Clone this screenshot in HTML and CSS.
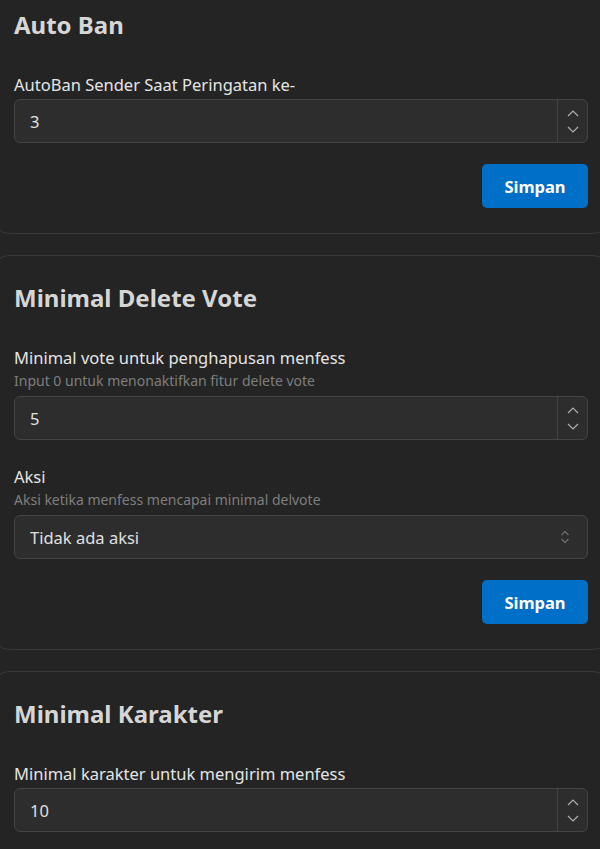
FILE: index.html
```html
<!DOCTYPE html>
<html lang="id">

<head>
    <meta charset="UTF-8">
    <meta name="viewport" content="width=device-width, initial-scale=1.0">
    <title>Pengaturan Menfess</title>
    <link rel="stylesheet" href="styles.css">
</head>

<body>
    <div class="settings">
        <!-- Auto Ban -->
        <section class="card">
            <h2>Auto Ban</h2>
            <div class="field">
                <label for="autoban">AutoBan Sender Saat Peringatan ke-</label>
                <div class="control">
                    <input type="number" id="autoban" value="3">
                    <span class="stepper">
                        <svg width="12" height="7" viewBox="0 0 12 7"><path d="M1 6L6 1L11 6" /></svg>
                        <svg width="12" height="7" viewBox="0 0 12 7"><path d="M1 1L6 6L11 1" /></svg>
                    </span>
                </div>
            </div>
            <div class="actions">
                <button class="btn-save">Simpan</button>
            </div>
        </section>

        <!-- Minimal Delete Vote -->
        <section class="card">
            <h2>Minimal Delete Vote</h2>
            <div class="field">
                <label for="delvote">Minimal vote untuk penghapusan menfess</label>
                <p class="hint">Input 0 untuk menonaktifkan fitur delete vote</p>
                <div class="control">
                    <input type="number" id="delvote" value="5">
                    <span class="stepper">
                        <svg width="12" height="7" viewBox="0 0 12 7"><path d="M1 6L6 1L11 6" /></svg>
                        <svg width="12" height="7" viewBox="0 0 12 7"><path d="M1 1L6 6L11 1" /></svg>
                    </span>
                </div>
            </div>
            <div class="field">
                <label for="aksi">Aksi</label>
                <p class="hint">Aksi ketika menfess mencapai minimal delvote</p>
                <div class="control">
                    <select id="aksi">
                        <option>Tidak ada aksi</option>
                        <option>Hapus menfess</option>
                    </select>
                    <svg class="select-icon" width="10" height="16" viewBox="0 0 10 16"><path d="M1.5 6L5 2.5L8.5 6M1.5 10L5 13.5L8.5 10" /></svg>
                </div>
            </div>
            <div class="actions">
                <button class="btn-save">Simpan</button>
            </div>
        </section>

        <!-- Minimal Karakter -->
        <section class="card">
            <h2>Minimal Karakter</h2>
            <div class="field">
                <label for="minchar">Minimal karakter untuk mengirim menfess</label>
                <div class="control">
                    <input type="number" id="minchar" value="10">
                    <span class="stepper">
                        <svg width="12" height="7" viewBox="0 0 12 7"><path d="M1 6L6 1L11 6" /></svg>
                        <svg width="12" height="7" viewBox="0 0 12 7"><path d="M1 1L6 6L11 1" /></svg>
                    </span>
                </div>
            </div>
            <div class="actions">
                <button class="btn-save">Simpan</button>
            </div>
        </section>
    </div>
</body>

</html>
```

FILE: styles.css
```css
/* Basic Reset */
* {
    margin: 0;
    padding: 0;
    box-sizing: border-box;
}

body {
    font-family: "Noto Sans", Arial, sans-serif;
    background-color: #242424;
    color: #e4e4e4;
    overflow: hidden;
}

/* page is scrolled a little, cards run past the edges */
.settings {
    margin: -18px -9px 0 -7px;
}

/* Card */
.card {
    border: 1px solid #3a3a3a;
    border-radius: 16px;
    padding: 26px 20px 25px;
    margin-bottom: 21px;
}

.card h2 {
    font-size: 24px;
    line-height: 32px;
    font-weight: 700;
    color: #d6d6d6;
    margin-bottom: 32px;
}

/* Fields */
.field + .field {
    margin-top: 25px;
}

.field label {
    display: block;
    font-size: 16.5px;
    line-height: 24px;
    color: #e4e4e4;
    margin-bottom: 2px;
}

.field .hint {
    font-size: 14px;
    line-height: 20px;
    color: #7e7e7e;
    margin-top: -1px;
    margin-bottom: 5px;
}

.control {
    display: flex;
    align-items: center;
    height: 44px;
    background-color: #2d2d2d;
    border: 1px solid #444;
    border-radius: 6px;
}

.control input,
.control select {
    flex: 1;
    height: 100%;
    min-width: 0;
    padding: 0 15px;
    font-family: inherit;
    font-size: 16.5px;
    color: #e0e0e0;
    background: transparent;
    border: none;
    outline: none;
    appearance: none;
    -moz-appearance: textfield;
}

.control input::-webkit-inner-spin-button,
.control input::-webkit-outer-spin-button {
    -webkit-appearance: none;
    margin: 0;
}

/* Number stepper */
.stepper {
    display: flex;
    flex-direction: column;
    justify-content: space-around;
    align-items: center;
    width: 30px;
    height: 100%;
    padding: 5px 0;
    border-left: 1px solid #444;
}

.stepper svg path {
    fill: none;
    stroke: #b0b0b0;
    stroke-width: 1.2;
}

.select-icon {
    margin-right: 17px;
}

.select-icon path {
    fill: none;
    stroke: #6a6a6a;
    stroke-width: 1.3;
}

/* Button */
.actions {
    display: flex;
    justify-content: flex-end;
    margin-top: 21px;
}

.btn-save {
    width: 106px;
    height: 44px;
    font-family: inherit;
    font-size: 16.5px;
    font-weight: 700;
    color: #fff;
    background-color: #006fc8;
    border: none;
    border-radius: 5px;
    cursor: pointer;
}

.btn-save:hover {
    background-color: #0062b0;
}
```
